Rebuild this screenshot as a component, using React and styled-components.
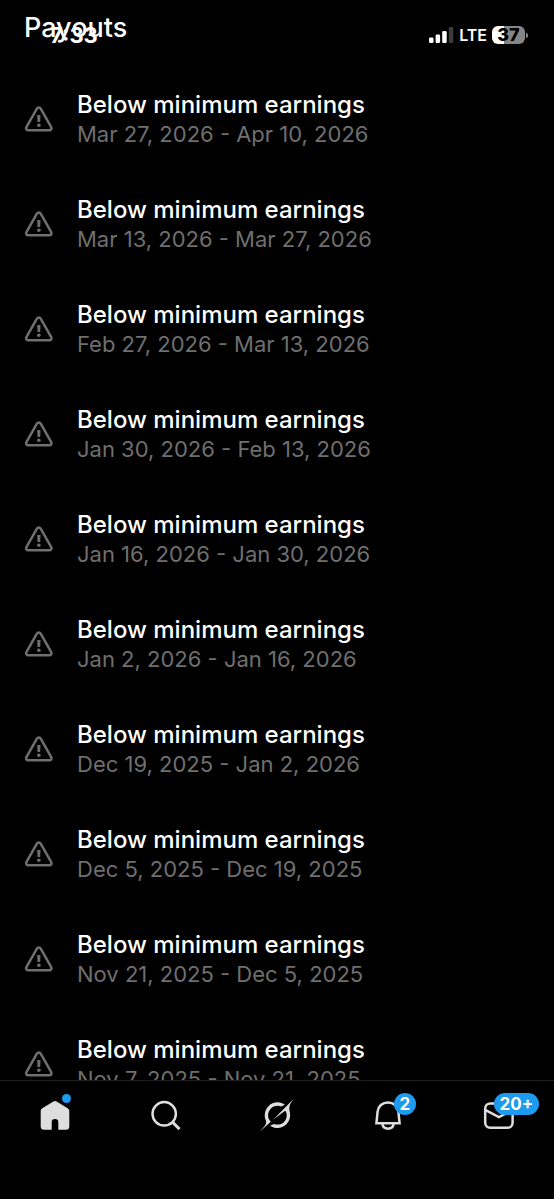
import styled, { createGlobalStyle } from "styled-components";

const GlobalStyle = createGlobalStyle`
    * {
        box-sizing: border-box;
    }

    body {
        margin: 0;
        background: #000;
        color: #fff;
        font-family: Inter, "Liberation Sans", sans-serif;
    }
`

const Screen = styled.div`
    position: relative;
    display: flex;
    flex-direction: column;
    height: 100vh;
    overflow: hidden;
`

const StatusBar = styled.div`
    position: absolute;
    top: 0;
    left: 0;
    right: 0;
    display: flex;
    align-items: center;
    justify-content: space-between;
    height: 70px;
    padding: 0 26px 0 50px;
`

const Time = styled.span`
    font-size: 22px;
    font-weight: 700;
`

const Signals = styled.div`
    display: flex;
    align-items: center;
    gap: 5px;
`

const Carrier = styled.span`
    font-size: 16px;
    font-weight: 600;
    line-height: 20px;
`

const Battery = styled.div`
    position: relative;
    display: flex;
    align-items: center;
    justify-content: center;
    width: 33px;
    height: 18px;
    margin-right: 3px;
    border-radius: 6px;
    background: linear-gradient(to right, #fff ${(props) => props.$level}%, #858585 ${(props) => props.$level}%);
    color: #000;
    font-size: 18px;
    font-weight: 800;
    line-height: 18px;

    &::after {
        content: "";
        position: absolute;
        right: -3px;
        top: 7px;
        width: 2px;
        height: 5px;
        border-radius: 0 2px 2px 0;
        background: #858585;
    }
`

const Content = styled.main`
    flex: 1;
    min-height: 0;
    overflow: hidden;
    padding: 11px 24px 0;
`

const Title = styled.h1`
    margin: 0 0 45px;
    font-size: 27px;
    font-weight: 500;
    line-height: 34px;
`

const List = styled.ul`
    display: flex;
    flex-direction: column;
    gap: 47px;
    margin: 0;
    padding: 0;
    list-style: none;
`

const Row = styled.li`
    display: flex;
    align-items: center;
    gap: 23px;
`

const WarningSvg = styled.svg`
    flex: none;
    width: 30px;
    height: 28px;
    color: #6f6f6f;
`

const RowTitle = styled.div`
    font-size: 24px;
    font-weight: 500;
    line-height: 30px;
`

const Period = styled.div`
    color: #6f6f6f;
    font-size: 22px;
    line-height: 28px;
`

const TabBar = styled.nav`
    display: grid;
    grid-template-columns: repeat(5, 1fr);
    flex: none;
    height: 119px;
    padding-top: 17px;
    border-top: 1px solid #1f1f1f;
    background: #000;
`

const Tab = styled.a`
    position: relative;
    justify-self: center;
    width: 34px;
    height: 34px;
    color: #dedede;

    svg {
        display: block;
        width: 34px;
        height: 34px;
    }
`

const Dot = styled.span`
    position: absolute;
    top: -4px;
    left: 24px;
    width: 9px;
    height: 9px;
    border-radius: 50%;
    background: #1d9bf0;
`

const Badge = styled.span`
    position: absolute;
    top: -5px;
    left: ${(props) => (props.$wide ? "12px" : "23px")};
    min-width: 22px;
    height: 22px;
    padding: 0 ${(props) => (props.$wide ? "6px" : "0")};
    border-radius: 11px;
    background: #1d9bf0;
    color: #fff;
    font-size: 17px;
    font-weight: 700;
    line-height: 22px;
    text-align: center;
`

const periods = [
    "Mar 27, 2026 - Apr 10, 2026",
    "Mar 13, 2026 - Mar 27, 2026",
    "Feb 27, 2026 - Mar 13, 2026",
    "Jan 30, 2026 - Feb 13, 2026",
    "Jan 16, 2026 - Jan 30, 2026",
    "Jan 2, 2026 - Jan 16, 2026",
    "Dec 19, 2025 - Jan 2, 2026",
    "Dec 5, 2025 - Dec 19, 2025",
    "Nov 21, 2025 - Dec 5, 2025",
    "Nov 7, 2025 - Nov 21, 2025",
];

function WarningIcon() {
    return (
        <WarningSvg viewBox="0 0 30 28" fill="none" aria-hidden="true">
            <path
                d="M12.9 3.6 2.4 22.1c-.9 1.6.2 3.1 1.8 3.1h21.2c1.6 0 2.7-1.5 1.8-3.1L16.7 3.6c-.9-1.5-2.9-1.5-3.8 0z"
                stroke="currentColor"
                strokeWidth="2.5"
            />
            <path d="M13.2 10h3.3l-.3 7h-2.7z" fill="currentColor" />
            <circle cx="14.85" cy="20.2" r="1.8" fill="currentColor" />
        </WarningSvg>
    )
}

function SignalIcon() {
    return (
        <svg width="25" height="18" viewBox="0 0 25 18" fill="#fff" aria-hidden="true">
            <rect x="0" y="11.5" width="4.5" height="5.5" rx="1.3" />
            <rect x="6.6" y="8.5" width="4.5" height="8.5" rx="1.3" />
            <rect x="13.2" y="5" width="4.5" height="12" rx="1.3" />
            <rect x="19.8" y="1" width="4.5" height="16" rx="1.3" fill="#3c3c3c" />
        </svg>
    )
}

function HomeIcon() {
    return (
        <svg viewBox="0 0 34 34" fill="currentColor" aria-hidden="true">
            <path d="M15.4 3.6 4.3 10.2A3.2 3.2 0 0 0 2.7 13v15.3a3.5 3.5 0 0 0 3.5 3.5h7.5v-7.6a3.3 3.3 0 0 1 6.6 0v7.6h7.5a3.5 3.5 0 0 0 3.5-3.5V13a3.2 3.2 0 0 0-1.6-2.8L18.6 3.6a3.1 3.1 0 0 0-3.2 0z" />
        </svg>
    )
}

function SearchIcon() {
    return (
        <svg viewBox="0 0 34 34" fill="none" stroke="currentColor" strokeWidth="2.5" aria-hidden="true">
            <circle cx="15.2" cy="15.8" r="11.7" />
            <path d="m23.5 24.1 7 7" strokeWidth="2.9" />
        </svg>
    )
}

function GrokIcon() {
    return (
        <svg viewBox="0 0 33 32" fill="currentColor" aria-hidden="true">
            <path d="M12.745 20.54l10.97-8.19c.539-.4 1.307-.244 1.564.38 1.349 3.288.746 7.241-1.938 9.955-2.683 2.714-6.417 3.31-9.83 1.954l-3.728 1.745c5.347 3.697 11.84 2.782 15.898-1.324 3.219-3.255 4.216-7.692 3.284-11.693l.008.009c-1.351-5.878.332-8.227 3.782-13.031L33 0l-4.54 4.59v-.014L12.743 20.544m-2.263 1.987c-3.837-3.707-3.175-9.446.1-12.755 2.42-2.449 6.388-3.448 9.852-1.979l3.72-1.737c-.67-.49-1.53-1.017-2.515-1.387-4.455-1.854-9.789-.931-13.41 2.728-3.483 3.523-4.579 8.94-2.697 13.561 1.405 3.454-.899 5.898-3.22 8.364C1.49 30.2.666 31.074 0 32l10.478-9.466" />
        </svg>
    )
}

function BellIcon() {
    return (
        <svg viewBox="0 0 34 34" fill="none" stroke="currentColor" strokeWidth="2.5" aria-hidden="true">
            <path d="M17 4.4c-5.7 0-9.800 3.9-10.4 9.3L5.400 25.3h23.2l-1.200-11.6C26.8 8.3 22.7 4.4 17 4.4z" />
            <path d="M11.3 25.8c.5 2.9 2.9 4.9 5.7 4.9s5.200-2 5.700-4.900" />
        </svg>
    )
}

function MailIcon() {
    return (
        <svg viewBox="0 0 34 34" fill="none" stroke="currentColor" strokeWidth="2.5" aria-hidden="true">
            <rect x="3.2" y="5.4" width="27.4" height="24.4" rx="5" />
            <path d="m3.600 12.2 13.3 7 13.3-7" />
        </svg>
    )
}

export default function App() {
    return (
        <>
            <GlobalStyle />
            <Screen>
                <Content>
                    <Title>Payouts</Title>
                    <List>
                        {periods.map((period) => (
                            <Row key={period}>
                                <WarningIcon />
                                <div>
                                    <RowTitle>Below minimum earnings</RowTitle>
                                    <Period>{period}</Period>
                                </div>
                            </Row>
                        ))}
                    </List>
                </Content>
                <TabBar>
                    <Tab href="#home" aria-label="Home">
                        <HomeIcon />
                        <Dot />
                    </Tab>
                    <Tab href="#search" aria-label="Search">
                        <SearchIcon />
                    </Tab>
                    <Tab href="#grok" aria-label="Grok">
                        <GrokIcon />
                    </Tab>
                    <Tab href="#notifications" aria-label="Notifications">
                        <BellIcon />
                        <Badge>2</Badge>
                    </Tab>
                    <Tab href="#messages" aria-label="Messages">
                        <MailIcon />
                        <Badge $wide>20+</Badge>
                    </Tab>
                </TabBar>
                <StatusBar>
                    <Time>7:33</Time>
                    <Signals>
                        <SignalIcon />
                        <Carrier>LTE</Carrier>
                        <Battery $level={37}>37</Battery>
                    </Signals>
                </StatusBar>
            </Screen>
        </>
    )
}
